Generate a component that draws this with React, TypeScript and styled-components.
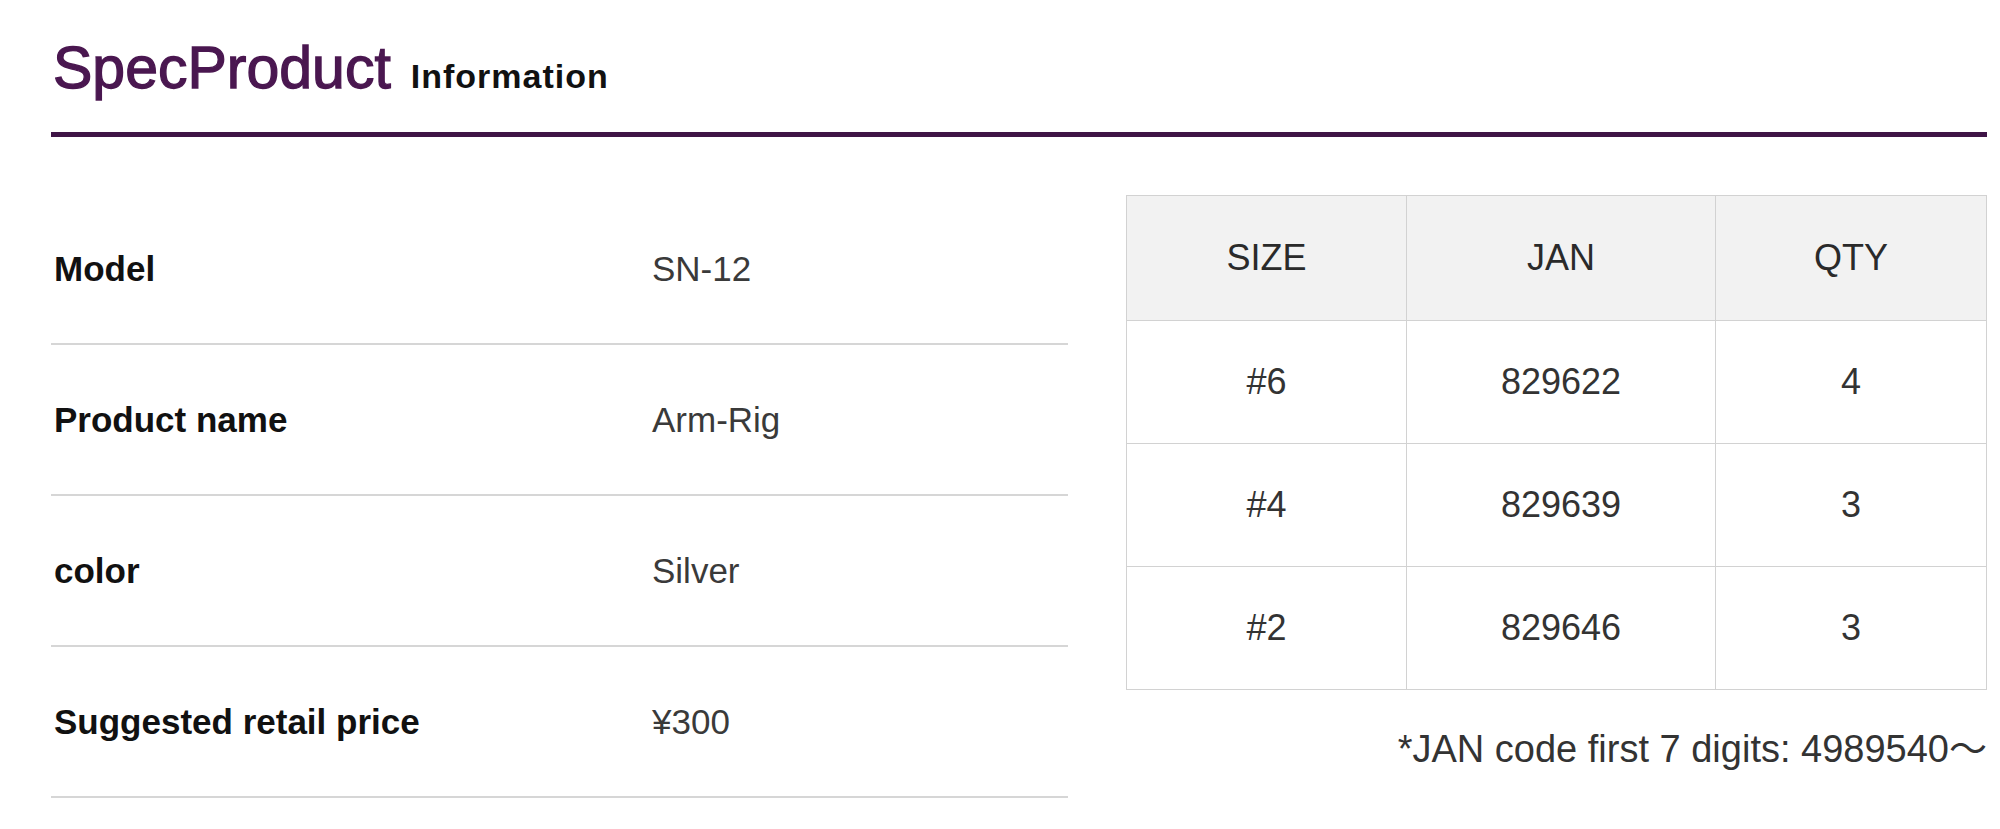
import React, { FC } from 'react'
import styled, { createGlobalStyle } from 'styled-components'

const GlobalStyle = createGlobalStyle`
    html, body {
        margin: 0;
        padding: 0;
        background: #ffffff;
    }
    body {
        font-family: "Liberation Sans", Arial, "Noto Sans CJK JP", sans-serif;
        color: #333333;
    }
`

const Wrapper = styled.div`
    padding: 34px 13px 40px 51px;
`

const Heading = styled.h2`
    display: flex;
    align-items: baseline;
    gap: 20px;
    margin: 0;
    padding-bottom: 22px;
    border-bottom: 5px solid #3f1446;
    line-height: 68px;
    font-weight: normal;
`

const Title = styled.span`
    font-size: 59px;
    color: #4a1750;
    -webkit-text-stroke: 1.3px #4a1750;
    padding-left: 2px;
`

const Sub = styled.span`
    font-size: 34px;
    font-weight: bold;
    letter-spacing: 1px;
    color: #111111;
`

const Body = styled.div`
    display: grid;
    grid-template-columns: 1017px 861px;
    column-gap: 58px;
    margin-top: 57px;
    align-items: start;
`

const SpecList = styled.dl`
    margin: 0;
`

const SpecRow = styled.div`
    display: grid;
    grid-template-columns: 601px 1fr;
    align-items: center;
    height: 151px;
    border-bottom: 2px solid #d6d6d6;
    box-sizing: border-box;
    font-size: 35px;
`

const Label = styled.dt`
    margin: 0;
    padding-left: 3px;
    font-weight: bold;
    color: #111111;
`

const Value = styled.dd`
    margin: 0;
    color: #3a3a3a;
`

const SideCol = styled.div`
    display: flex;
    flex-direction: column;
    align-items: flex-end;
`

const Table = styled.table`
    width: 100%;
    border-collapse: collapse;
    margin-top: 1px;
    font-size: 36px;
    color: #333333;
`

const Th = styled.th<{ $w?: number }>`
    width: ${(p) => (p.$w ? `${p.$w}px` : 'auto')};
    height: 124px;
    padding: 0;
    background: #f2f2f2;
    border: 1px solid #d2d2d2;
    font-weight: normal;
    text-align: center;
    color: #2a2a2a;
`

const Td = styled.td`
    height: 122px;
    padding: 0;
    border: 1px solid #d2d2d2;
    text-align: center;
`

const Note = styled.p`
    margin: 28px 0 0;
    font-size: 38px;
    color: #333333;
    white-space: nowrap;
`

const specs = [
    { label: 'Model', value: 'SN-12' },
    { label: 'Product name', value: 'Arm-Rig' },
    { label: 'color', value: 'Silver' },
    { label: 'Suggested retail price', value: '¥300' },
]

const sizes = [
    { size: '#6', jan: '829622', qty: '4' },
    { size: '#4', jan: '829639', qty: '3' },
    { size: '#2', jan: '829646', qty: '3' },
]

const App: FC = () => {
    return (
        <>
            <GlobalStyle />
            <Wrapper>
                <Heading>
                    <Title>SpecProduct</Title>
                    <Sub>Information</Sub>
                </Heading>
                <Body>
                    <SpecList>
                        {specs.map((s) => (
                            <SpecRow key={s.label}>
                                <Label>{s.label}</Label>
                                <Value>{s.value}</Value>
                            </SpecRow>
                        ))}
                    </SpecList>
                    <SideCol>
                        <Table>
                            <thead>
                                <tr>
                                    <Th $w={279}>SIZE</Th>
                                    <Th $w={308}>JAN</Th>
                                    <Th>QTY</Th>
                                </tr>
                            </thead>
                            <tbody>
                                {sizes.map((r) => (
                                    <tr key={r.size}>
                                        <Td>{r.size}</Td>
                                        <Td>{r.jan}</Td>
                                        <Td>{r.qty}</Td>
                                    </tr>
                                ))}
                            </tbody>
                        </Table>
                        <Note>*JAN code first 7 digits: 4989540〜</Note>
                    </SideCol>
                </Body>
            </Wrapper>
        </>
    )
}

export default App
